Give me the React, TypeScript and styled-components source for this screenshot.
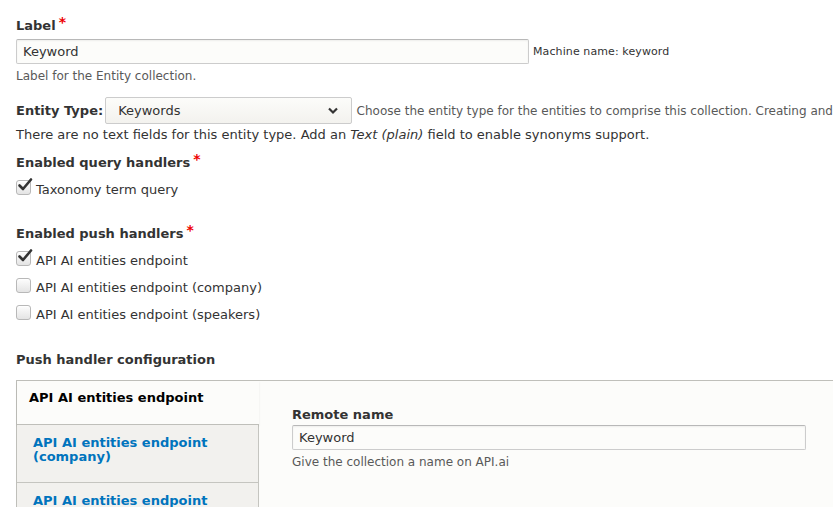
import React from 'react'
import styled, { createGlobalStyle } from 'styled-components'

const GlobalStyle = createGlobalStyle`
  html, body {
    margin: 0;
    padding: 0;
    background: #ffffff;
    overflow: hidden;
  }
  body {
    font-family: "DejaVu Sans", Verdana, sans-serif;
    font-size: 13px;
    color: #333333;
  }
`

const Page = styled.div`
  width: 833px;
  height: 507px;
  padding: 16px 0 0 16px;
  box-sizing: border-box;
  overflow: hidden;
`

const FormItem = styled.div<{ $mb?: number }>`
  margin-bottom: ${({ $mb }) => $mb ?? 0}px;
`

const Label = styled.label<{ $inline?: boolean }>`
  display: ${({ $inline }) => ($inline ? 'inline-block' : 'block')};
  font-weight: bold;
  font-size: 13px;
  line-height: 18px;
  color: #333;
  margin-bottom: ${({ $inline }) => ($inline ? 0 : 4)}px;
  white-space: nowrap;
`

const Required = styled.span`
  color: #e00;
  font-size: 14px;
  margin-left: 3px;
  position: relative;
  top: -3px;
`

const Row = styled.div`
  display: flex;
  align-items: center;
  gap: 5px;
  white-space: nowrap;
`

const TextInput = styled.div<{ $width: number }>`
  box-sizing: border-box;
  width: ${({ $width }) => $width}px;
  height: 25px;
  padding: 0 6px;
  display: flex;
  align-items: center;
  border: 1px solid #ccc;
  border-top-color: #b8b8b8;
  border-radius: 2px;
  background: #fcfcfa;
  box-shadow: inset 0 1px 2px rgba(0, 0, 0, 0.06);
  font-size: 13px;
  color: #333;
`

const Suffix = styled.span`
  font-size: 11px;
  color: #333;
  margin-left: -1px;
  letter-spacing: 0.1px;
`

const Description = styled.div<{ $dark?: boolean }>`
  font-size: ${({ $dark }) => ($dark ? 13 : 12)}px;
  line-height: 17px;
  color: ${({ $dark }) => ($dark ? '#333' : '#595959')};
  margin-top: ${({ $dark }) => ($dark ? 2 : 4)}px;
  white-space: nowrap;
`

const Select = styled.div`
  box-sizing: border-box;
  width: 251px;
  height: 27px;
  margin-left: -3px;
  padding: 0 12px 0 12px;
  display: flex;
  align-items: center;
  justify-content: space-between;
  border: 1px solid #ccc;
  border-radius: 2px;
  background: linear-gradient(#fcfcfa, #f3f2ee);
  font-size: 13px;
  color: #333;
`

const InlineDescription = styled.span`
  font-size: 12px;
  color: #595959;
`

const CheckRow = styled.div`
  display: flex;
  align-items: center;
  gap: 5px;
  height: 27px;
  font-size: 13px;
  color: #333;
`

const Box = styled.span`
  box-sizing: border-box;
  position: relative;
  width: 15px;
  height: 15px;
  border: 1px solid #b8b8b8;
  border-radius: 3px;
  background: linear-gradient(#fdfdfd, #e4e4e4);
  box-shadow: inset 0 1px 1px rgba(255, 255, 255, 0.8);
  margin-top: -4px;
`

const Tick = styled.svg`
  position: absolute;
  left: 0;
  top: -4px;
`

const Checkbox = ({ checked }: { checked?: boolean }) => (
  <Box>
    {checked && (
      <Tick width="16" height="16" viewBox="0 0 16 16">
        <path d="M2.5 8.5 L6 12 L14 2.5" fill="none" stroke="#333" strokeWidth="2.6" strokeLinecap="round" strokeLinejoin="round" />
      </Tick>
    )}
  </Box>
)

const Tabs = styled.div`
  display: flex;
  border-top: 1px solid #bfbfba;
  border-left: 1px solid #bfbfba;
  height: 140px;
`

const TabList = styled.div`
  width: 241px;
  flex-shrink: 0;
  background: #f2f1ee;
  border-right: 1px solid #c5c5c0;
`

const Tab = styled.div<{ $active?: boolean; $height: number }>`
  box-sizing: border-box;
  height: ${({ $height }) => $height}px;
  padding: ${({ $active }) => ($active ? '10px 12px' : '11px 16px')};
  font-weight: bold;
  font-size: 13px;
  line-height: 14px;
  color: ${({ $active }) => ($active ? '#000' : '#0074bd')};
  background: ${({ $active }) => ($active ? '#fcfcfa' : '#f2f1ee')};
  border-bottom: 1px solid ${({ $active }) => ($active ? '#bfbfba' : '#c5c5c0')};
  margin-right: ${({ $active }) => ($active ? -1 : 0)}px;
  position: relative;
  box-shadow: ${({ $active }) => ($active ? '0 1px 2px rgba(0,0,0,0.08)' : 'none')};
`

const Pane = styled.div`
  flex: 1;
  background: #fcfcfa;
  padding: 25px 0 0 33px;
`

const PaneLabel = styled(Label)`
  margin-bottom: 1px;
`

export default function App() {
  return (
    <>
      <GlobalStyle />
      <Page>
        <FormItem $mb={12}>
          <Label>
            Label<Required>*</Required>
          </Label>
          <Row>
            <TextInput $width={513}>Keyword</TextInput>
            <Suffix>Machine name: keyword</Suffix>
          </Row>
          <Description>Label for the Entity collection.</Description>
        </FormItem>

        <FormItem $mb={10}>
          <Row>
            <Label $inline>Entity Type:</Label>
            <Select>
              <span>Keywords</span>
              <svg width="12" height="8" viewBox="0 0 12 8">
                <path d="M2 1.5 L6 5.5 L10 1.5" fill="none" stroke="#333" strokeWidth="2.2" />
              </svg>
            </Select>
            <InlineDescription>
              Choose the entity type for the entities to comprise this collection. Creating and
            </InlineDescription>
          </Row>
          <Description $dark>
            There are no text fields for this entity type. Add an <i>Text (plain)</i> field to enable synonyms support.
          </Description>
        </FormItem>

        <FormItem $mb={21}>
          <Label>
            Enabled query handlers<Required>*</Required>
          </Label>
          <CheckRow>
            <Checkbox checked />
            Taxonomy term query
          </CheckRow>
        </FormItem>

        <FormItem $mb={23}>
          <Label>
            Enabled push handlers<Required>*</Required>
          </Label>
          <CheckRow>
            <Checkbox checked />
            API AI entities endpoint
          </CheckRow>
          <CheckRow>
            <Checkbox />
            API AI entities endpoint (company)
          </CheckRow>
          <CheckRow>
            <Checkbox />
            API AI entities endpoint (speakers)
          </CheckRow>
        </FormItem>

        <FormItem $mb={11}>
          <Label>Push handler configuration</Label>
        </FormItem>

        <Tabs>
          <TabList>
            <Tab $active $height={44}>API AI entities endpoint</Tab>
            <Tab $height={58}>
              API AI entities endpoint
              <br />
              (company)
            </Tab>
            <Tab $height={58}>
              API AI entities endpoint
              <br />
              (speakers)
            </Tab>
          </TabList>
          <Pane>
            <PaneLabel>Remote name</PaneLabel>
            <TextInput $width={514}>Keyword</TextInput>
            <Description>Give the collection a name on API.ai</Description>
          </Pane>
        </Tabs>
      </Page>
    </>
  )
}
